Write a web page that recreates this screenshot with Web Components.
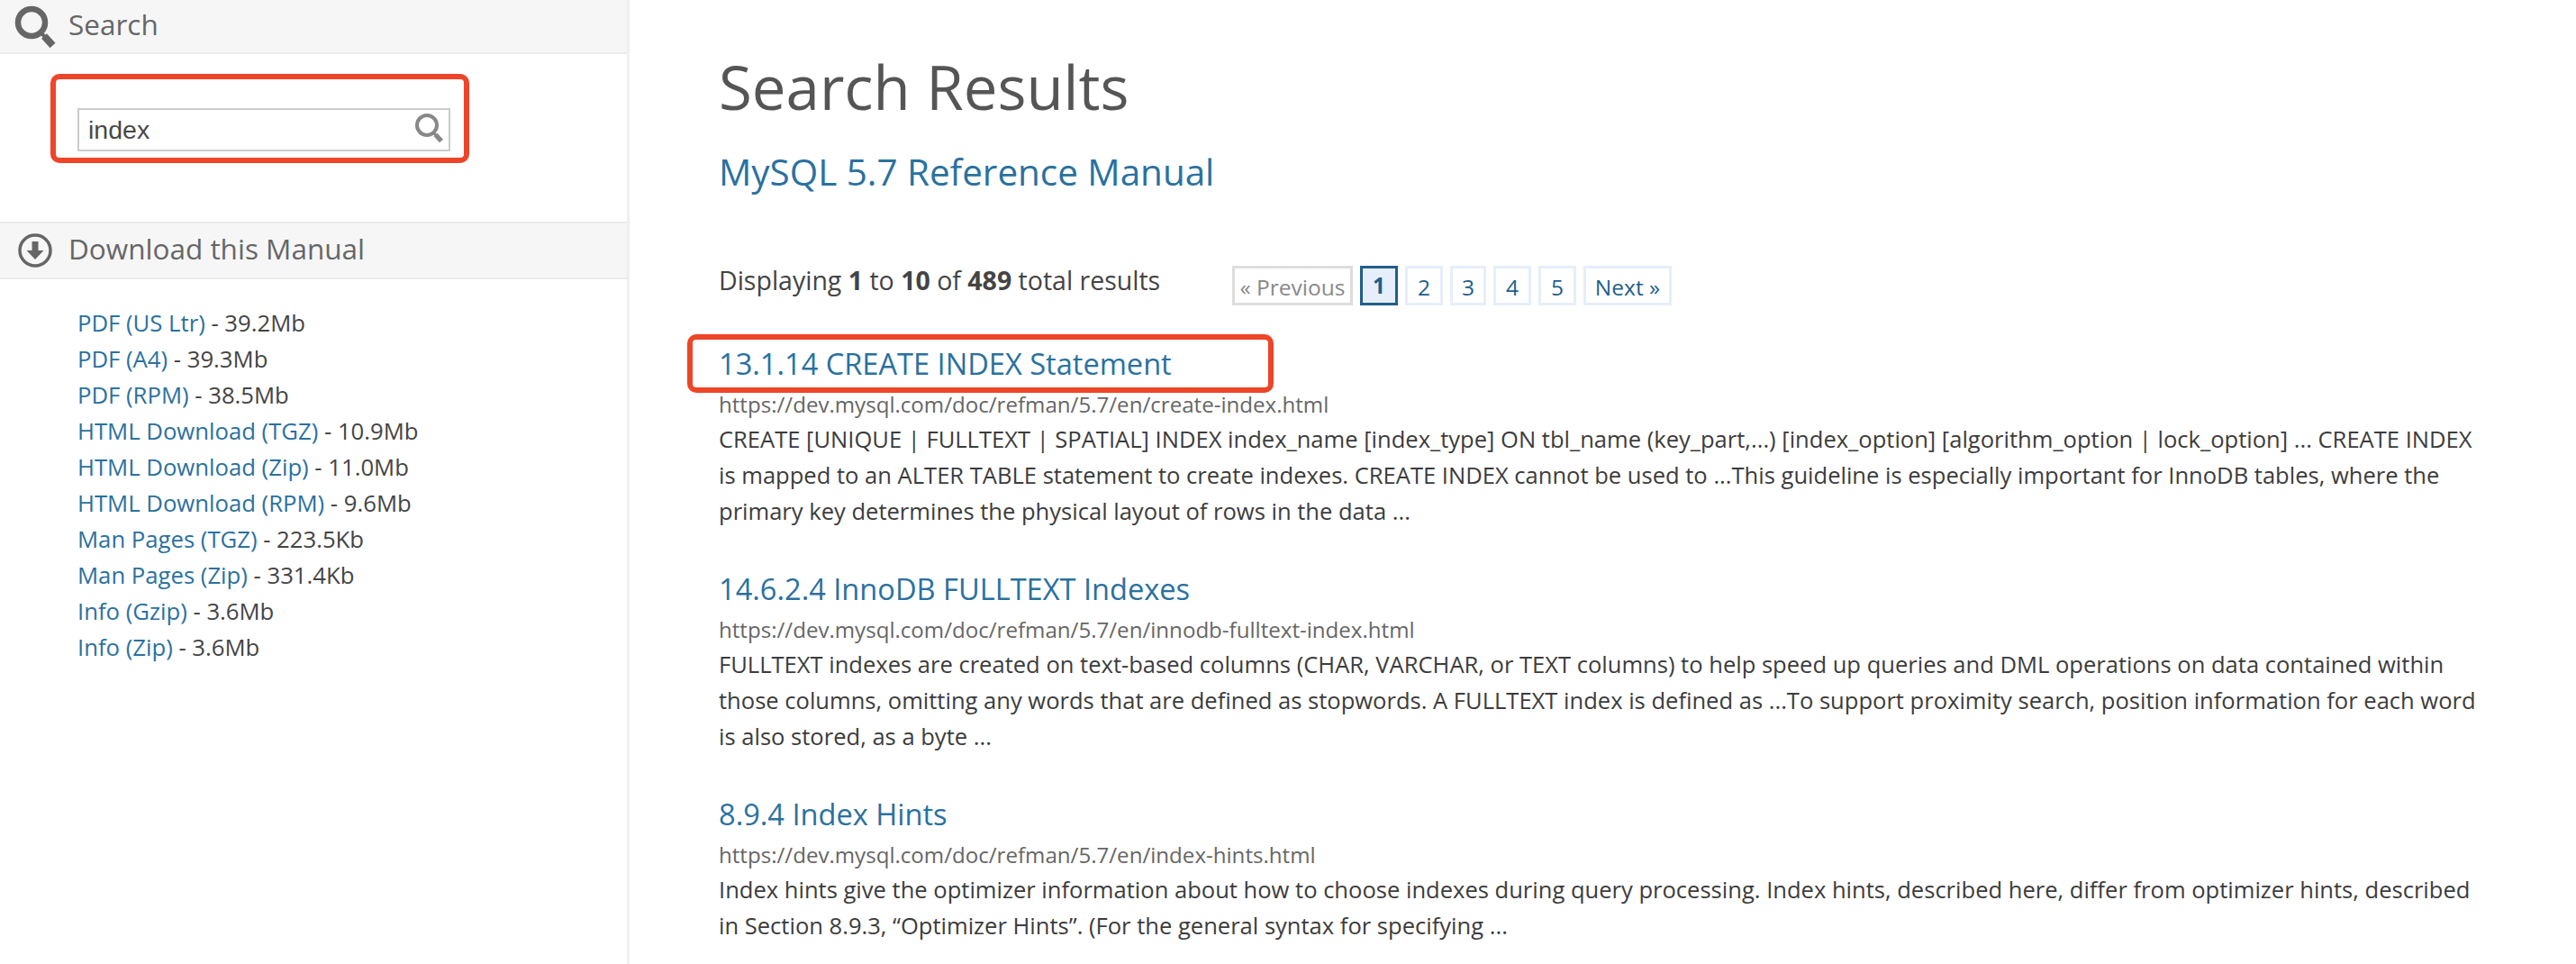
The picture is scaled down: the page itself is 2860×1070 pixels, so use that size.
<!DOCTYPE html>
<html>
<head>
<meta charset="utf-8">
<title>Search Results</title>
<style>
  html, body { margin: 0; padding: 0; background: #fff; overflow: hidden; }
  body { font-family: "Open Sans", sans-serif; color: #4e4e4e; }
</style>
</head>
<body>
<docs-page>
  <docs-sidebar slot="side">
    <side-heading label="Search">
      <svg slot="icon" width="48" height="48" viewBox="0 0 48 48">
        <circle cx="20" cy="20" r="15" fill="none" stroke="#666" stroke-width="6.5"/>
        <path d="M29 30 L35 36" stroke="#666" stroke-width="4"/>
        <path d="M34 35 L43.500 45.500" stroke="#666" stroke-width="8" stroke-linejoin="round"/>
      </svg>
    </side-heading>
    <search-box value="index"></search-box>
    <side-heading label="Download this Manual" class="second">
      <svg slot="icon" width="48" height="48" viewBox="0 0 48 48">
        <circle cx="24" cy="24" r="17" fill="none" stroke="#666" stroke-width="3.5"/>
        <path d="M20.500 14h7v10h6L24 34 14.500 24h6z" fill="#666"/>
      </svg>
    </side-heading>
    <download-list>
      <download-item href="#" size="39.2Mb">PDF (US Ltr)</download-item>
      <download-item href="#" size="39.3Mb">PDF (A4)</download-item>
      <download-item href="#" size="38.5Mb">PDF (RPM)</download-item>
      <download-item href="#" size="10.9Mb">HTML Download (TGZ)</download-item>
      <download-item href="#" size="11.0Mb">HTML Download (Zip)</download-item>
      <download-item href="#" size="9.6Mb">HTML Download (RPM)</download-item>
      <download-item href="#" size="223.5Kb">Man Pages (TGZ)</download-item>
      <download-item href="#" size="331.4Kb">Man Pages (Zip)</download-item>
      <download-item href="#" size="3.6Mb">Info (Gzip)</download-item>
      <download-item href="#" size="3.6Mb">Info (Zip)</download-item>
    </download-list>
  </docs-sidebar>
  <results-main slot="main">
    <results-head title-text="Search Results" manual="MySQL 5.7 Reference Manual"></results-head>
    <results-bar>
      <span slot="count">Displaying <b>1</b> to <b>10</b> of <b>489</b> total results</span>
    </results-bar>
    <search-result heading="13.1.14 CREATE INDEX Statement" url="https://dev.mysql.com/doc/refman/5.7/en/create-index.html" marked>CREATE [UNIQUE | FULLTEXT | SPATIAL] INDEX index_name [index_type] ON tbl_name (key_part,...) [index_option] [algorithm_option | lock_option] ... CREATE INDEX is mapped to an ALTER TABLE statement to create indexes. CREATE INDEX cannot be used to ...This guideline is especially important for InnoDB tables, where the primary key determines the physical layout of rows in the data ...</search-result>
    <search-result heading="14.6.2.4 InnoDB FULLTEXT Indexes" url="https://dev.mysql.com/doc/refman/5.7/en/innodb-fulltext-index.html">FULLTEXT indexes are created on text-based columns (CHAR, VARCHAR, or TEXT columns) to help speed up queries and DML operations on data contained within those columns, omitting any words that are defined as stopwords. A FULLTEXT index is defined as ...To support proximity search, position information for each word is also stored, as a byte ...</search-result>
    <search-result heading="8.9.4 Index Hints" url="https://dev.mysql.com/doc/refman/5.7/en/index-hints.html">Index hints give the optimizer information about how to choose indexes during query processing. Index hints, described here, differ from optimizer hints, described in Section 8.9.3, “Optimizer Hints”. (For the general syntax for specifying ...</search-result>
  </results-main>
</docs-page>

<script>
  class DocsPage extends HTMLElement {
    constructor() {
      super();
      this.attachShadow({ mode: 'open' });
      this.shadowRoot.innerHTML = `
        <style>
          :host { display: flex; width: 2860px; height: 1070px; overflow: hidden; }
          .side { flex: 0 0 696px; border-right: 3px solid #efefef; }
          .main { flex: 1; min-width: 0; padding-left: 99px; padding-right: 106px; }
        </style>
        <div class="side"><slot name="side"></slot></div>
        <div class="main"><slot name="main"></slot></div>
      `;
    }
  }
  customElements.define('docs-page', DocsPage);

  class DocsSidebar extends HTMLElement {
    constructor() {
      super();
      this.attachShadow({ mode: 'open' });
      this.shadowRoot.innerHTML = `
        <style>
          :host { display: block; }
        </style>
        <slot></slot>
      `;
    }
  }
  customElements.define('docs-sidebar', DocsSidebar);

  class SideHeading extends HTMLElement {
    constructor() {
      super();
      this.attachShadow({ mode: 'open' });
      this.shadowRoot.innerHTML = `
        <style>
          :host { display: block; }
          .bar {
            display: flex;
            align-items: center;
            height: 58px;
            padding-left: 15px;
            gap: 13px;
            background: #f6f6f6;
            border-bottom: 2px solid #ececec;
            font-size: 31.500px;
            color: #666;
          }
          .bar span { margin-bottom: 5px; }
          :host(.second) .bar { height: 60px; border-top: 2px solid #ececec; }
          ::slotted(svg) { flex: none; }
        </style>
        <div class="bar"><slot name="icon"></slot><span>${this.getAttribute('label')}</span></div>
      `;
    }
  }
  customElements.define('side-heading', SideHeading);

  class SearchBox extends HTMLElement {
    constructor() {
      super();
      this.attachShadow({ mode: 'open' });
      this.shadowRoot.innerHTML = `
        <style>
          :host { display: block; height: 186px; padding: 60px 0 0 86px; box-sizing: border-box; position: relative; }
          .input {
            display: flex;
            align-items: center;
            justify-content: space-between;
            box-sizing: border-box;
            width: 414px;
            height: 48px;
            padding: 0 4px 0 10px;
            border: 2px solid #ccc;
            font-family: "Liberation Sans", sans-serif;
            font-size: 28.500px;
            color: #484848;
          }
          .input svg { margin-top: -4px; }
          .mark {
            position: absolute;
            left: 56px;
            top: 22px;
            width: 465px;
            height: 99px;
            box-sizing: border-box;
            border: 6px solid #ee4428;
            border-radius: 10px;
          }
        </style>
        <div class="input">
          <span>${this.getAttribute('value')}</span>
          <svg width="36" height="36" viewBox="0 0 36 36">
            <circle cx="16" cy="15" r="11" fill="none" stroke="#888" stroke-width="4"/>
            <path d="M23 23 L26 26" stroke="#888" stroke-width="3"/>
            <path d="M25.500 25.500 L32 32.500" stroke="#888" stroke-width="5.500"/>
          </svg>
        </div>
        <div class="mark"></div>
      `;
    }
  }
  customElements.define('search-box', SearchBox);

  class DownloadList extends HTMLElement {
    constructor() {
      super();
      this.attachShadow({ mode: 'open' });
      this.shadowRoot.innerHTML = `
        <style>
          :host { display: flex; flex-direction: column; padding: 29px 0 0 86px; }
        </style>
        <slot></slot>
      `;
    }
  }
  customElements.define('download-list', DownloadList);

  class DownloadItem extends HTMLElement {
    constructor() {
      super();
      this.attachShadow({ mode: 'open' });
      this.shadowRoot.innerHTML = `
        <style>
          :host { display: block; font-size: 25.700px; line-height: 40px; color: #444; white-space: nowrap; }
          a { color: #2a719f; text-decoration: none; }
        </style>
        <a href="${this.getAttribute('href')}"><slot></slot></a> - ${this.getAttribute('size')}
      `;
    }
  }
  customElements.define('download-item', DownloadItem);

  class ResultsMain extends HTMLElement {
    constructor() {
      super();
      this.attachShadow({ mode: 'open' });
      this.shadowRoot.innerHTML = `
        <style>
          :host { display: block; }
        </style>
        <slot></slot>
      `;
    }
  }
  customElements.define('results-main', ResultsMain);

  class ResultsHead extends HTMLElement {
    constructor() {
      super();
      this.attachShadow({ mode: 'open' });
      this.shadowRoot.innerHTML = `
        <style>
          :host { display: block; padding-top: 50px; }
          h1 { margin: 0; font-size: 67.200px; line-height: 92px; font-weight: 400; color: #555; }
          h2 { margin: 21px 0 0; font-size: 40.400px; line-height: 56px; font-weight: 400; }
          a { color: #2a719f; text-decoration: none; }
        </style>
        <h1>${this.getAttribute('title-text')}</h1>
        <h2><a href="#">${this.getAttribute('manual')}</a></h2>
      `;
    }
  }
  customElements.define('results-head', ResultsHead);

  class ResultsBar extends HTMLElement {
    constructor() {
      super();
      this.attachShadow({ mode: 'open' });
      this.shadowRoot.innerHTML = `
        <style>
          :host { display: flex; align-items: flex-start; height: 47px; margin-top: 73px; font-size: 28.500px; line-height: 38px; color: #444; }
          .count { flex: 0 0 570px; }
        </style>
        <div class="count"><slot name="count"></slot></div>
        <page-nav></page-nav>
      `;
    }
  }
  customElements.define('results-bar', ResultsBar);

  class PageNav extends HTMLElement {
    constructor() {
      super();
      this.attachShadow({ mode: 'open' });
      const pages = [1, 2, 3, 4, 5].map(n =>
        `<a href="#" class="${n === 1 ? 'current' : ''}${n === 3 ? 'narrow' : ''}">${n}</a>`).join('');
      this.shadowRoot.innerHTML = `
        <style>
          :host { display: flex; gap: 8px; padding-top: 3px; font-size: 24.500px; }
          a, span {
            box-sizing: border-box;
            display: flex;
            align-items: center;
            justify-content: center;
            height: 44px;
            width: 42px;
            padding-top: 4px;
            border: 3px solid #e6eefb;
            color: #215f8a;
            text-decoration: none;
          }
          span { width: 134px; border-color: #ddd; color: #888; }
          a.narrow { width: 40px; }
          a.current { background: #e6eefb; border-color: #215f8a; font-weight: 700; padding-top: 0; }
          a.next { width: 98px; }
        </style>
        <span>« Previous</span>${pages}<a href="#" class="next">Next »</a>
      `;
    }
  }
  customElements.define('page-nav', PageNav);

  class SearchResult extends HTMLElement {
    constructor() {
      super();
      this.attachShadow({ mode: 'open' });
      this.shadowRoot.innerHTML = `
        <style>
          :host { display: block; position: relative; margin-top: 40px; font-size: 25.550px; line-height: 40px; color: #3c3c3c; }
          h3 { margin: 0; font-size: 32.600px; line-height: 50px; font-weight: 400; }
          h3 a { color: #2a719f; text-decoration: none; }
          .url { color: #666; font-size: 24.100px; height: 38px; }
          .body { padding-bottom: 2px; }
          .mark {
            position: absolute;
            left: -35px;
            top: -8px;
            width: 651px;
            height: 65px;
            box-sizing: border-box;
            border: 6px solid #ee4428;
            border-radius: 10px;
          }
          :host(:not([marked])) .mark { display: none; }
        </style>
        <h3><a href="#">${this.getAttribute('heading')}</a></h3>
        <div class="url">${this.getAttribute('url')}</div>
        <div class="body"><slot></slot></div>
        <div class="mark"></div>
      `;
    }
  }
  customElements.define('search-result', SearchResult);
</script>
</body>
</html>
